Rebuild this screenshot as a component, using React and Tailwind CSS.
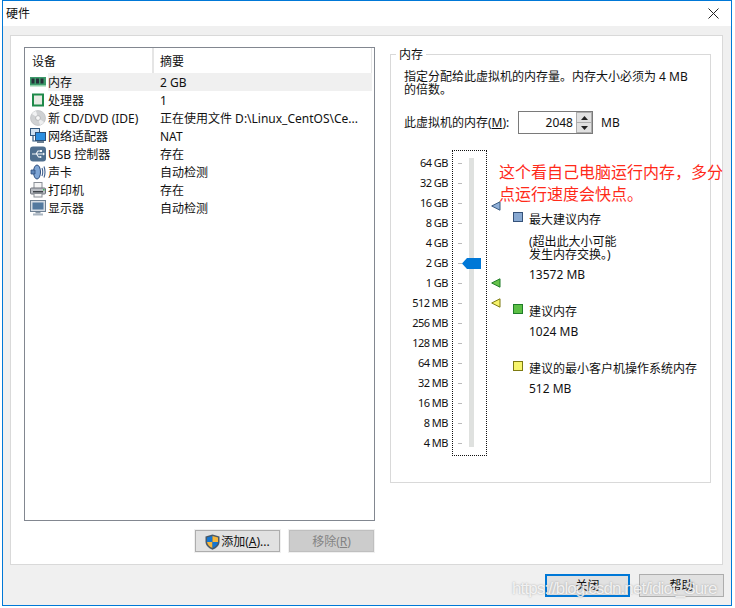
const FONT = "font-['Noto_Sans','Noto_Sans_CJK_SC',sans-serif]";

const Ram = () => (
  <svg width="16" height="16" viewBox="0 0 16 16">
    <rect x="0" y="3" width="16" height="9" fill="#3c9a6a" />
    <rect x="0" y="11" width="16" height="1.5" fill="#8fd0a8" />
    <rect x="1.5" y="4.5" width="3" height="5" fill="#26323a" />
    <rect x="6" y="4.5" width="3" height="5" fill="#26323a" />
    <rect x="10.5" y="4.5" width="3" height="5" fill="#26323a" />
  </svg>
);
const Cpu = () => (
  <svg width="16" height="16" viewBox="0 0 16 16">
    <rect x="2" y="1.5" width="12" height="13" fill="#1f8a4a" />
    <rect x="4" y="3.5" width="8" height="9" fill="#e8ebe4" />
  </svg>
);
const Cd = () => (
  <svg width="16" height="16" viewBox="0 0 16 16">
    <circle cx="8" cy="8" r="7.5" fill="#cfd1d3" stroke="#b5b7ba" strokeWidth="0.6" />
    <path d="M8 8 L2 4 A7 7 0 0 1 6 1 Z" fill="#f1f2f3" />
    <path d="M8 8 L14 12 A7 7 0 0 1 10 15 Z" fill="#eeeff0" />
    <circle cx="8" cy="8" r="2.4" fill="#f7f7f7" stroke="#a6a8ab" strokeWidth="0.7" />
  </svg>
);
const Net = () => (
  <svg width="16" height="16" viewBox="0 0 16 16">
    <rect x="0.5" y="0.5" width="9" height="7" fill="#cfe0f0" stroke="#33587e" />
    <path d="M3 8 V13 H8" fill="none" stroke="#33587e" strokeWidth="1.2" />
    <rect x="5.5" y="4.5" width="10" height="8" fill="#2d8fe0" stroke="#2a4f78" />
    <rect x="7" y="13" width="7" height="2" fill="#6b7f92" />
  </svg>
);
const Usb = () => (
  <svg width="16" height="16" viewBox="0 0 16 16">
    <rect x="0" y="0.5" width="16" height="15" rx="3" fill="#4f6f8f" />
    <path d="M2 8 H13 M6 8 L8 5 H10 M6.5 8 L8.5 11 H10" fill="none" stroke="#f2f5f8" strokeWidth="1.1" />
    <rect x="10" y="4" width="2" height="2" fill="#f2f5f8" />
    <circle cx="10.5" cy="11" r="1" fill="#f2f5f8" />
    <path d="M13 6.5 L15 8 L13 9.5 Z" fill="#f2f5f8" />
  </svg>
);
const Sound = () => (
  <svg width="16" height="16" viewBox="0 0 16 16">
    <ellipse cx="7" cy="8" rx="3.5" ry="7" fill="#7fa6d6" stroke="#2f4f7f" strokeWidth="1" />
    <path d="M1 6 H5 V10 H1 Z" fill="#5f86b8" stroke="#2f4f7f" strokeWidth="0.8" />
    <path d="M12 4 Q13.5 8 12 12 M14 2.5 Q16 8 14 13.5" fill="none" stroke="#3d5f8f" strokeWidth="1.1" />
  </svg>
);
const Printer = () => (
  <svg width="16" height="16" viewBox="0 0 16 16">
    <rect x="4" y="0.5" width="8" height="6" fill="#f5f5f5" stroke="#8a8f96" />
    <rect x="0.5" y="6" width="15" height="6" rx="1" fill="#b9bdc3" stroke="#6c7178" />
    <rect x="3" y="9" width="10" height="1.5" fill="#3f444a" />
    <rect x="4" y="11.5" width="8" height="3.5" fill="#f5f5f5" stroke="#8a8f96" />
    <rect x="13" y="7" width="1.5" height="1.5" fill="#3dbb57" />
  </svg>
);
const Monitor = () => (
  <svg width="16" height="16" viewBox="0 0 16 16">
    <rect x="0.5" y="0.5" width="15" height="11" fill="#d5dce4" stroke="#6f8194" />
    <rect x="2.5" y="2.5" width="11" height="7" fill="#53799f" />
    <rect x="5.5" y="12" width="5" height="1.5" fill="#8a98a6" />
    <rect x="3" y="13.5" width="10" height="2" fill="#a9b5c1" />
  </svg>
);
const Shield = () => (
  <svg width="15" height="16" viewBox="0 0 15 16" className="shrink-0">
    <path d="M7.5 0.5 L14.5 2.5 V8 Q14.5 13 7.5 15.8 Q0.5 13 0.5 8 V2.5 Z" fill="#4a5a68" />
    <path d="M7.5 2 V8 H2 V3.4 Z" fill="#1476d2" />
    <path d="M7.5 2 L13 3.4 V8 H7.5 Z" fill="#f6b73c" />
    <path d="M2 8 H7.5 V14 Q3 12.5 2 8 Z" fill="#f6b73c" />
    <path d="M7.5 8 H13 Q12 12.5 7.5 14 Z" fill="#1476d2" />
  </svg>
);
const Marker = ({ fill, stroke }) => (
  <svg width="10" height="10" viewBox="0 0 10 10" className="block">
    <path d="M0.7 5 L9 0.8 V9.2 Z" fill={fill} stroke={stroke} strokeWidth="1" />
  </svg>
);

const rows = [
  [Ram, "内存", "2 GB"],
  [Cpu, "处理器", "1"],
  [Cd, "新 CD/DVD (IDE)", "正在使用文件 D:\\Linux_CentOS\\Ce..."],
  [Net, "网络适配器", "NAT"],
  [Usb, "USB 控制器", "存在"],
  [Sound, "声卡", "自动检测"],
  [Printer, "打印机", "存在"],
  [Monitor, "显示器", "自动检测"],
];
const scale = ["64 GB","32 GB","16 GB","8 GB","4 GB","2 GB","1 GB","512 MB","256 MB","128 MB","64 MB","32 MB","16 MB","8 MB","4 MB"];

function Legend({ color, border, title, children, className }) {
  return (
    <div className={"flex " + className}>
      <span className="w-[10px] h-[10px] mt-[1px] mr-[6px] border shrink-0" style={{ background: color, borderColor: border }} />
      <div>
        <div className="h-[18px] leading-[18px]">{title}</div>
        {children}
      </div>
    </div>
  );
}

export default function App() {
  return (
    <div className={FONT + " w-[735px] h-[608px] bg-white text-[12px] text-[#111] pl-[2px] pr-[3px] pb-[2px] relative overflow-hidden"}>
      <div className="h-full border border-[#0078d7] bg-[#f0f0f0] flex flex-col">
        <div className="h-[25px] bg-white flex items-center justify-between pl-[3px] pr-[12px] shrink-0">
          <span className="text-[12px]">硬件</span>
          <svg width="11" height="11" viewBox="0 0 11 11"><path d="M0.5 0.5 L10.5 10.5 M10.5 0.5 L0.5 10.5" stroke="#222" strokeWidth="1" /></svg>
        </div>
        <div className="ml-[7px] mr-[8px] mt-[9px] h-[530px] bg-white border border-[#d9d9d9] flex pl-[13px] pt-[11px] shrink-0">
          <div className="w-[351px] shrink-0 flex flex-col">
            <div className="h-[474px] border border-[#828790] flex flex-col shrink-0">
              <div className="flex h-[25px] items-center shrink-0 mr-[2px] border-r border-[#e5e5e5]">
                <div className="w-[129px] h-full pl-[7px] pt-[2px] flex items-center border-r-2 border-[#e5e5e5]">设备</div>
                <div className="pl-[6px] pt-[2px]">摘要</div>
              </div>
              {rows.map(([Icon, name, val], i) => (
                <div key={i} className="flex h-[18px] items-center pl-[5px] relative shrink-0">
                  <span className="w-[16px] h-[16px] shrink-0 mr-[2px]"><Icon /></span>
                  <div className={"flex flex-1 h-full items-center pt-[1px] mr-[2px] " + (i === 0 ? "bg-[#f0f0f0]" : "")}>
                    <span className="w-[112px] shrink-0 whitespace-nowrap">{name}</span>
                    <span className="whitespace-nowrap">{val}</span>
                  </div>
                </div>
              ))}
            </div>
            <div className="flex justify-end gap-[9px] mt-[9px] mr-[1px]">
              <button className="w-[85px] h-[22px] bg-[#e1e1e1] border border-[#adadad] flex items-center justify-center gap-[1px] pt-[1px] outline outline-1 outline-[#f0f0f0]">
                <Shield />
                <span>添加(<span className="underline">A</span>)...</span>
              </button>
              <button className="w-[85px] h-[22px] bg-[#cccccc] border border-[#bfbfbf] text-[#838383] flex items-center justify-center pt-[1px] outline outline-1 outline-[#f0f0f0]">
                <span>移除(<span className="underline">R</span>)</span>
              </button>
            </div>
          </div>
          <div className="w-[321px] h-[429px] ml-[15px] mt-[7px] border border-[#d9d9d9] relative shrink-0">
            <span className="absolute left-[5px] top-[-8px] bg-white px-[3px] leading-[16px]">内存</span>
            <div className="pl-[13px] pt-[15px]">
              <p className="w-[300px] leading-[13px] whitespace-nowrap">指定分配给此虚拟机的内存量。内存大小必须为 4 MB<br />的倍数。</p>
              <div className="flex items-center mt-[15px] h-[23px]">
                <span className="w-[114px] whitespace-nowrap">此虚拟机的内存(<span className="underline">M</span>):</span>
                <div className="w-[75px] h-[23px] border border-[#7a7a7a] flex items-center">
                  <span className="w-[54px] text-right">2048</span>
                  <div className="ml-auto w-[16px] h-full border border-[#adadad] flex flex-col text-[#222]">
                    <span className="flex-1 bg-[#e1e1e1] flex items-center justify-center border-b border-[#adadad]">
                      <svg width="7" height="4" viewBox="0 0 7 4"><path d="M3.5 0 L7 4 H0 Z" fill="#222" /></svg>
                    </span>
                    <span className="flex-1 bg-[#e1e1e1] flex items-center justify-center">
                      <svg width="7" height="4" viewBox="0 0 7 4"><path d="M0 0 H7 L3.5 4 Z" fill="#222" /></svg>
                    </span>
                  </div>
                </div>
                <span className="ml-[8px]">MB</span>
              </div>
              <div className="flex mt-[16px]">
                <div className="w-[44px] shrink-0 flex flex-col pt-[3px] text-[11px] tracking-[-0.5px] text-right">
                  {scale.map((s) => (
                    <div key={s} className="h-[20px] leading-[20px] whitespace-nowrap">{s}</div>
                  ))}
                </div>
                <div className="w-[35px] h-[306px] ml-[4px] border border-dotted border-[#111] relative shrink-0 flex pt-[2px]">
                  <div className="w-[4px] ml-[5px] flex flex-col shrink-0">
                    {scale.map((s) => (
                      <div key={s} className="h-[20px] flex items-center"><span className="w-[4px] h-[1px] bg-[#bbbbbb]" /></div>
                    ))}
                  </div>
                  <div className="w-[5px] h-[289px] ml-[7px] mt-[5px] bg-[#dfe1df]" />
                  <svg width="19" height="11" viewBox="0 0 19 11" className="absolute left-[9px] top-[107px]"><path d="M0 5.5 L5 0 H19 V11 H5 Z" fill="#0078d7" /></svg>
                </div>
                <div className="w-[26px] shrink-0 relative">
                  <div className="absolute left-[4px] top-[51px]"><Marker fill="#8fb0d8" stroke="#3a5a80" /></div>
                  <div className="absolute left-[4px] top-[128px]"><Marker fill="#66c24a" stroke="#1f7d28" /></div>
                  <div className="absolute left-[4px] top-[148px]"><Marker fill="#f7f36a" stroke="#7d7a12" /></div>
                </div>
                <div className="pt-[61px] flex flex-col">
                  <Legend color="#88a9d2" border="#35527a" title="最大建议内存">
                    <div className="leading-[13px] mt-[6px]">(超出此大小可能<br />发生内存交换。)</div>
                    <div className="leading-[18px] mt-[5px]">13572 MB</div>
                  </Legend>
                  <Legend color="#5cbf45" border="#1f7d28" title="建议内存" className="mt-[19px]">
                    <div className="leading-[18px] mt-[2px]">1024 MB</div>
                  </Legend>
                  <Legend color="#f7f56c" border="#7d7a12" title="建议的最小客户机操作系统内存" className="mt-[19px]">
                    <div className="leading-[18px] mt-[2px]">512 MB</div>
                  </Legend>
                </div>
              </div>
            </div>
          </div>
        </div>
        <div className="flex justify-end gap-[9px] mt-[9px] mr-[7px]">
          <button className="w-[85px] h-[23px] bg-[#e1e1e1] border-2 border-[#0078d7]">关闭</button>
          <button className="w-[85px] h-[23px] bg-[#e1e1e1] border border-[#adadad]">帮助</button>
        </div>
      </div>
      <div className="absolute left-[499px] top-[161px] w-[226px] text-[16px] leading-[22px] text-[#ff2a1a]">这个看自己电脑运行内存，多分点运行速度会快点。</div>
      <div className="absolute left-[512px] top-[577px] text-[17px] tracking-[-0.9px] leading-[24px] whitespace-nowrap font-['Liberation_Sans',sans-serif] text-white/80 [text-shadow:0_0_2px_rgba(110,110,110,0.6)]">https://blog.csdn.net/idiot_Sure</div>
    </div>
  );
}
